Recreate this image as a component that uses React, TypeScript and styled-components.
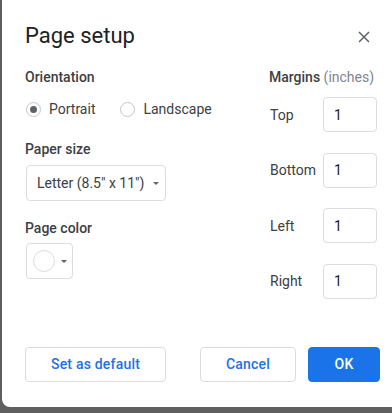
import React, { useState } from 'react';
import styled, { createGlobalStyle } from 'styled-components';

const GlobalStyle = createGlobalStyle`
  html, body {
    margin: 0;
    padding: 0;
    background: #5f5f5f;
    overflow: hidden;
    font-family: Roboto, "Liberation Sans", Arial, sans-serif;
  }
`;

const Dialog = styled.div`
  box-sizing: border-box;
  margin-left: 2px;
  width: 400px;
  height: 407px;
  background: #fff;
  border-radius: 0 0 0 8px;
  padding: 22px 0 0 23px;
  color: #3c4043;
`;

const Header = styled.div`
  display: flex;
  align-items: center;
  justify-content: space-between;
  width: 351px;
  height: 28px;
`;

const Title = styled.h1`
  margin: 0;
  font-size: 22px;
  line-height: 28px;
  font-weight: 400;
  color: #202124;
`;

const CloseButton = styled.button`
  display: flex;
  align-items: center;
  justify-content: center;
  width: 24px;
  height: 24px;
  padding: 0;
  border: none;
  background: none;
  cursor: pointer;
  margin-top: 2px;
`;

const Body = styled.div`
  display: grid;
  grid-template-columns: 244px 108px;
  margin-top: 17px;
`;

const Column = styled.div`
  display: flex;
  flex-direction: column;
`;

const Label = styled.div<{ $gap?: number }>`
  font-size: 14px;
  line-height: 20px;
  font-weight: 500;
  color: #3c4043;
  margin-top: ${(p) => p.$gap ?? 0}px;
`;

const Muted = styled.span`
  font-weight: 400;
  color: #80868b;
`;

const RadioRow = styled.div`
  display: flex;
  align-items: center;
  gap: 24px;
  margin-top: 12px;
  height: 20px;
`;

const RadioLabel = styled.label`
  display: flex;
  align-items: center;
  gap: 8px;
  font-size: 14px;
  line-height: 20px;
  cursor: pointer;
`;

const RadioCircle = styled.span<{ $checked: boolean }>`
  box-sizing: border-box;
  width: 15px;
  height: 15px;
  border-radius: 50%;
  border: 1px solid #c6c6c6;
  display: flex;
  align-items: center;
  justify-content: center;
  margin-left: 1px;

  &::after {
    content: '';
    width: 7px;
    height: 7px;
    border-radius: 50%;
    background: ${(p) => (p.$checked ? '#5f6368' : 'transparent')};
  }
`;

const Select = styled.button`
  box-sizing: border-box;
  display: flex;
  align-items: center;
  gap: 9px;
  width: 140px;
  height: 36px;
  margin: 6px 0 0 1px;
  padding: 0 10px;
  border: 1px solid #dadce0;
  border-radius: 4px;
  background: #fff;
  font-family: inherit;
  font-size: 14px;
  color: #3c4043;
  white-space: nowrap;
`;

const Caret = styled.span`
  width: 0;
  height: 0;
  border-left: 3.5px solid transparent;
  border-right: 3.5px solid transparent;
  border-top: 3.5px solid #5f6368;
`;

const ColorButton = styled.button`
  box-sizing: border-box;
  display: flex;
  align-items: center;
  gap: 6px;
  width: 47px;
  height: 36px;
  margin: 5px 0 0 1px;
  padding: 0 0 0 6px;
  border: 1px solid #dadce0;
  border-radius: 4px;
  background: #fff;
`;

const Swatch = styled.span`
  box-sizing: border-box;
  width: 22px;
  height: 22px;
  border-radius: 50%;
  border: 1px solid #dadce0;
  background: #fff;
`;

const MarginList = styled.div`
  display: flex;
  flex-direction: column;
  gap: 20.5px;
  margin-top: 10px;
`;

const MarginRow = styled.div`
  display: flex;
  align-items: center;
  height: 35px;
`;

const MarginLabel = styled.span`
  width: 54px;
  padding-left: 1px;
  font-size: 14px;
  color: #3c4043;
`;

const MarginInput = styled.input`
  box-sizing: border-box;
  width: 54px;
  height: 35px;
  padding: 0 10px;
  border: 1px solid #dadce0;
  border-radius: 4px;
  font-family: inherit;
  font-size: 14px;
  color: #202124;
  outline: none;
`;

const Footer = styled.div`
  display: flex;
  align-items: center;
  gap: 12px;
  width: 355px;
  margin-top: 48px;
`;

const Button = styled.button<{ $primary?: boolean; $w: number }>`
  box-sizing: border-box;
  width: ${(p) => p.$w}px;
  height: 35px;
  border-radius: 4px;
  border: 1px solid ${(p) => (p.$primary ? '#1a73e8' : '#dadce0')};
  background: ${(p) => (p.$primary ? '#1a73e8' : '#fff')};
  color: ${(p) => (p.$primary ? '#fff' : '#1a73e8')};
  font-family: inherit;
  font-size: 14px;
  font-weight: 500;
  letter-spacing: 0.2px;
  cursor: pointer;
`;

const Spacer = styled.div`
  flex: 1;
`;

export default function App() {
  const [orientation, setOrientation] = useState('portrait');
  const margins = ['Top', 'Bottom', 'Left', 'Right'];

  return (
    <>
      <GlobalStyle />
      <Dialog>
        <Header>
          <Title>Page setup</Title>
          <CloseButton aria-label="Close">
            <svg width="12" height="12" viewBox="0 0 12 12">
              <path d="M1 1L11 11M11 1L1 11" stroke="#5f6368" strokeWidth="1.5" />
            </svg>
          </CloseButton>
        </Header>
        <Body>
          <Column>
            <Label>Orientation</Label>
            <RadioRow>
              <RadioLabel onClick={() => setOrientation('portrait')}>
                <RadioCircle $checked={orientation === 'portrait'} />
                Portrait
              </RadioLabel>
              <RadioLabel onClick={() => setOrientation('landscape')}>
                <RadioCircle $checked={orientation === 'landscape'} />
                Landscape
              </RadioLabel>
            </RadioRow>
            <Label $gap={20}>Paper size</Label>
            <Select>
              Letter (8.5" x 11")
              <Caret />
            </Select>
            <Label $gap={17}>Page color</Label>
            <ColorButton>
              <Swatch />
              <Caret />
            </ColorButton>
          </Column>
          <Column>
            <Label>
              Margins <Muted>(inches)</Muted>
            </Label>
            <MarginList>
              {margins.map((m) => (
                <MarginRow key={m}>
                  <MarginLabel>{m}</MarginLabel>
                  <MarginInput defaultValue="1" />
                </MarginRow>
              ))}
            </MarginList>
          </Column>
        </Body>
        <Footer>
          <Button $w={141}>Set as default</Button>
          <Spacer />
          <Button $w={96}>Cancel</Button>
          <Button $w={72} $primary>
            OK
          </Button>
        </Footer>
      </Dialog>
    </>
  );
}
